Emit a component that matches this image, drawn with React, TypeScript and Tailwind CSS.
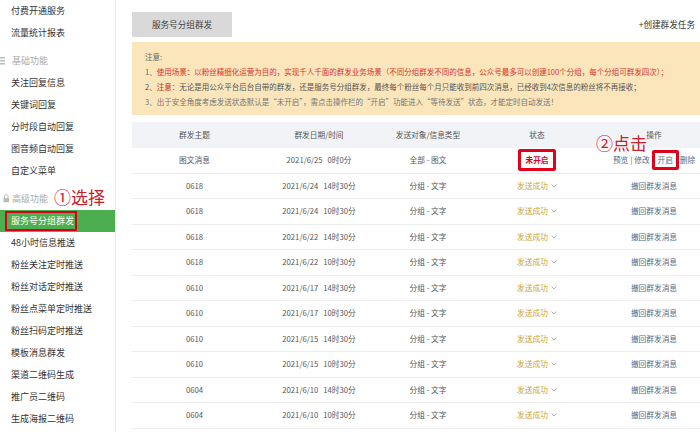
import React from 'react';

const font = "font-['Noto_Sans_CJK_SC','Noto_Sans',sans-serif]";

const groupA = ['付费开通服务', '流量统计报表'];
const basic = ['关注回复信息', '关键词回复', '分时段自动回复', '图音频自动回复', '自定义菜单'];
const advanced = [
  '48小时信息推送',
  '粉丝关注定时推送',
  '粉丝对话定时推送',
  '粉丝点菜单定时推送',
  '粉丝扫码定时推送',
  '模板消息群发',
  '渠道二维码生成',
  '推广员二维码',
  '生成海报二维码',
];

const rows = [
  ['0618', '2021/6/24', '14时30分'],
  ['0618', '2021/6/24', '10时30分'],
  ['0618', '2021/6/22', '14时30分'],
  ['0618', '2021/6/22', '10时30分'],
  ['0610', '2021/6/17', '14时30分'],
  ['0610', '2021/6/17', '10时30分'],
  ['0610', '2021/6/15', '14时30分'],
  ['0610', '2021/6/15', '10时30分'],
  ['0604', '2021/6/10', '14时30分'],
  ['0604', '2021/6/10', '10时30分'],
];

const cols = 'grid grid-cols-[125px_124px_94px_124px_110px]';

function NavItem({ label }: { label: string }) {
  return <div className="h-[22px] flex items-center pl-[11px] text-[9px] text-[#333]">{label}</div>;
}

function GroupHeader({ label, icon }: { label: string; icon: 'list' | 'lock' }) {
  return (
    <div className="h-[22px] mt-[6px] flex items-center text-[9px] text-[#aaa]">
      {icon === 'list' ? (
        <svg width="11" height="22" viewBox="0 0 11 22" className="shrink-0">
          <rect x="0" y="7" width="5" height="1.5" fill="#bbb" />
          <rect x="0" y="10" width="5" height="1.5" fill="#bbb" />
          <rect x="0" y="13" width="5" height="1.5" fill="#bbb" />
        </svg>
      ) : (
        <svg width="11" height="22" viewBox="0 0 11 22" className="shrink-0">
          <path d="M4.5 10 V8.5 a1.8 1.8 0 0 1 3.6 0 V10" fill="none" stroke="#bbb" strokeWidth="1" />
          <rect x="3.5" y="10" width="5.6" height="4.2" fill="#bbb" />
        </svg>
      )}
      <span className="pl-[1px]">{label}</span>
    </div>
  );
}

function Status() {
  return (
    <span className="inline-flex items-center gap-[3px] text-[#c9a43a]">
      发送成功
      <svg width="6" height="4" viewBox="0 0 6 4">
        <path d="M0.5 0.5 L3 3 L5.5 0.5" fill="none" stroke="#b5b5b5" strokeWidth="1" />
      </svg>
    </span>
  );
}

export default function App() {
  return (
    <div className={`relative w-[700px] h-[432px] overflow-hidden bg-white flex ${font}`}>
      <aside className="w-[116px] shrink-0 border-r border-[#e9e9e9]">
        {groupA.map((l) => (
          <NavItem key={l} label={l} />
        ))}
        <GroupHeader label="基础功能" icon="list" />
        {basic.map((l) => (
          <NavItem key={l} label={l} />
        ))}
        <GroupHeader label="高级功能" icon="lock" />
        <div className="h-[22px] bg-[#4cae4f] flex items-center pl-[5px]">
          <span className="h-[20px] w-[72px] border-[2px] border-[#d9001b] flex items-center pl-[4px] text-[9px] text-white">
            服务号分组群发
          </span>
        </div>
        {advanced.map((l) => (
          <NavItem key={l} label={l} />
        ))}
      </aside>

      <main className="flex-1 pl-[16px] pt-[12px] min-w-0">
        <div className="h-[25px] flex items-center justify-between">
          <div className="w-[100px] h-[25px] bg-[#d9d9d9] flex items-center justify-center text-[8.6px] text-[#444]">
            服务号分组群发
          </div>
          <div className="pr-[5px] text-[8.6px] text-[#333]">+创建群发任务</div>
        </div>

        <div className="mt-[5px] h-[73px] bg-[#fbe6bb] px-[13px] py-[6.5px] text-[7.5px] leading-[15px] text-[#666] whitespace-nowrap">
          <div>注意:</div>
          <div>
            1、
            <span className="text-[#d7322b]">
              使用场景：以粉丝精细化运营为目的，实现千人千面的群发业务场景（不同分组群发不同的信息，公众号最多可以创建100个分组，每个分组可群发四次）；
            </span>
          </div>
          <div className="text-[#555]">
            2、<span className="text-[#b8322b]">注意：</span>
            无论是用公众平台后台自带的群发，还是服务号分组群发，最终每个粉丝每个月只能收到前四次消息，已经收到4次信息的粉丝将不再接收；
          </div>
          <div className="text-[#777]">
            3、出于安全角度考虑发送状态默认是“未开启”，需点击操作栏的“开启”功能进入“等待发送”状态，才能定时自动发送！
          </div>
        </div>

        <div className="mt-[7px] w-[577px] text-[7.7px] text-[#555]">
          <div className={`${cols} h-[26px] bg-[#f2f3f6] items-center text-center`}>
            <div>群发主题</div>
            <div>群发日期/时间</div>
            <div>发送对象/信息类型</div>
            <div>状态</div>
            <div>操作</div>
          </div>

          <div className={`${cols} h-[25.5px] items-center text-center border-b border-[#ececec]`}>
            <div>图文消息</div>
            <div className="flex justify-center gap-[5px]">
              <span>2021/6/25</span>
              <span>0时0分</span>
            </div>
            <div>全部 - 图文</div>
            <div className="flex justify-center">
              <span className="w-[38px] h-[22px] border-[3px] border-[#e2001a] rounded-[2px] flex items-center justify-center font-bold text-[#d9001b]">
                未开启
              </span>
            </div>
            <div className="flex items-center justify-center leading-[10px] text-[#4f6b8a]">
              <span>预览</span>
              <span className="px-[2px]">|</span>
              <span>修改</span>
              <span className="ml-[2px] w-[27px] h-[20px] border-[3px] border-[#e2001a] rounded-[2px] flex items-center justify-center">
                开启
              </span>
              <span className="ml-[1px]">删除</span>
            </div>
          </div>

          {rows.map(([topic, date, time], i) => (
            <div key={i} className={`${cols} h-[25.5px] items-center text-center border-b border-[#ececec]`}>
              <div>{topic}</div>
              <div className="flex justify-center gap-[5px]">
                <span>{date}</span>
                <span>{time}</span>
              </div>
              <div>分组 - 文字</div>
              <div className="flex justify-center">
                <Status />
              </div>
              <div className="text-[#4f6b8a]">撤回群发消息</div>
            </div>
          ))}
        </div>
      </main>

      <div className="absolute left-[54px] top-[187px] text-[17px] leading-[19px] text-[#c8202d]">①选择</div>
      <div className="absolute left-[596px] top-[133px] text-[17px] leading-[19px] text-[#c8202d]">②点击</div>
    </div>
  );
}
